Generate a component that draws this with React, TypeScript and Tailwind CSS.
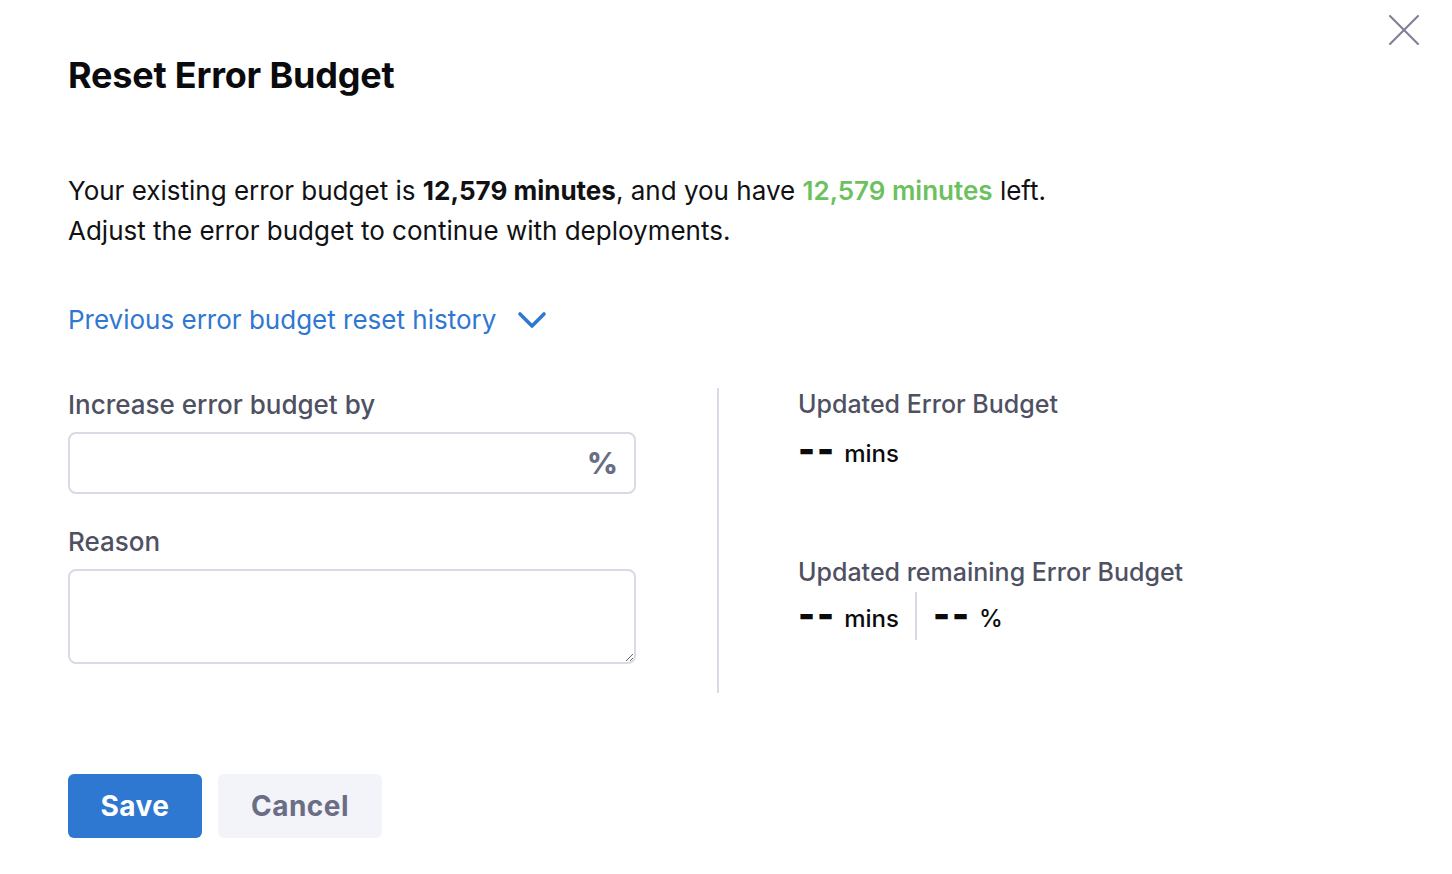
import { X, ChevronDown } from 'lucide-react';

export default function App() {
  return (
    <div
      className="relative w-[1452px] h-[874px] bg-white px-[68px] text-[#0b0b0d]"
      style={{ fontFamily: 'Inter, "Noto Sans", sans-serif' }}
    >
      <button
        aria-label="Close"
        className="absolute top-[2px] right-[20px] text-[#7f8097]"
      >
        <X className="h-[56px] w-[56px]" strokeWidth={0.9} />
      </button>

      <h1 className="pt-[55px] text-[36px] leading-[40px] font-bold tracking-[-0.2px]">
        Reset Error Budget
      </h1>

      <p className="mt-[76px] text-[26px] leading-[40px] text-[#111114]">
        Your existing error budget is <span className="font-bold">12,579 minutes</span>, and you
        have <span className="font-semibold text-[#6cc15e]">12,579 minutes</span> left.
        <br />
        Adjust the error budget to continue with deployments.
      </p>

      <button className="mt-[49px] flex h-[40px] items-center gap-[12px] text-[26px] leading-[40px] text-[#2f78d1]">
        Previous error budget reset history
        <ChevronDown className="h-[48px] w-[48px]" strokeWidth={1.8} />
      </button>

      <div className="mt-[48px] flex">
        <div className="w-[568px] h-[305px] pt-px">
          <label className="block text-[26px] leading-[32px] font-medium text-[#4f5162]">
            Increase error budget by
          </label>
          <div className="mt-[11px] h-[62px] flex items-center justify-end rounded-[8px] border-2 border-[#d9dae5] px-[16px]">
            <span className="text-[30px] font-extrabold text-[#6b6d85]">%</span>
          </div>

          <label className="mt-[32px] block text-[26px] leading-[32px] font-medium text-[#4f5162]">
            Reason
          </label>
          <textarea className="mt-[11px] block w-full h-[95px] rounded-[8px] border-2 border-[#d9dae5] outline-none" />
        </div>

        <div className="ml-[81px] w-[2px] h-[305px] bg-[#d9dae5]" />

        <div className="ml-[79px] flex flex-col">
          <span className="text-[25px] leading-[32px] font-medium text-[#4f5162]">
            Updated Error Budget
          </span>
          <div className="mt-[13px] flex items-baseline gap-[8px] text-[24px] leading-[32px] font-medium">
            <span className="text-[36px] font-black leading-[32px] tracking-[2px]">--</span>
            <span>mins</span>
          </div>

          <span className="mt-[86px] text-[25px] leading-[32px] font-medium text-[#4f5162]">
            Updated remaining Error Budget
          </span>
          <div className="mt-[4px] flex items-center text-[24px] leading-[32px] font-medium">
            <div className="flex items-baseline gap-[8px] pr-[16px]">
              <span className="text-[36px] font-black leading-[32px] tracking-[2px]">--</span>
              <span>mins</span>
            </div>
            <div className="w-[2px] h-[48px] bg-[#d9dae5]" />
            <div className="flex items-baseline gap-[8px] pl-[16px]">
              <span className="text-[36px] font-black leading-[32px] tracking-[2px]">--</span>
              <span>%</span>
            </div>
          </div>
        </div>
      </div>

      <div className="mt-[81px] flex gap-[16px]">
        <button className="h-[64px] w-[134px] rounded-[6px] bg-[#2f78d1] text-[28px] font-bold text-white tracking-[0.5px]">
          Save
        </button>
        <button className="h-[64px] w-[164px] rounded-[6px] bg-[#f3f3fa] text-[28px] font-bold text-[#6b6d85] tracking-[0.5px]">
          Cancel
        </button>
      </div>
    </div>
  );
}
